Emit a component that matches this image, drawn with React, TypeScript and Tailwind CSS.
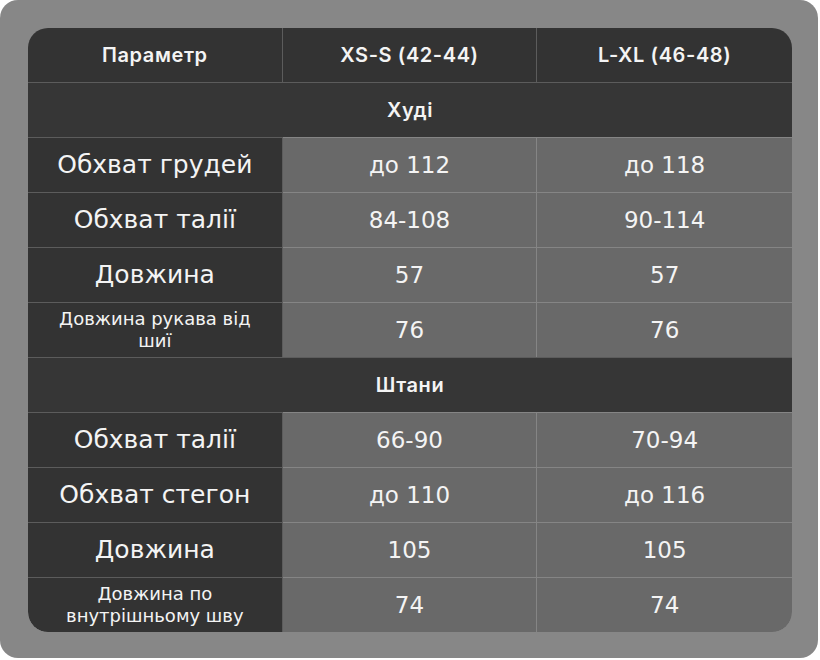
import React from "react";

const rows1 = [
  { label: "Обхват грудей", a: "до 112", b: "до 118", small: false },
  { label: "Обхват талії", a: "84-108", b: "90-114", small: false },
  { label: "Довжина", a: "57", b: "57", small: false },
  { label: "Довжина рукава від шиї", a: "76", b: "76", small: true },
];
const rows2 = [
  { label: "Обхват талії", a: "66-90", b: "70-94", small: false },
  { label: "Обхват стегон", a: "до 110", b: "до 116", small: false },
  { label: "Довжина", a: "105", b: "105", small: false },
  { label: "Довжина по внутрішньому шву", a: "74", b: "74", small: true },
];

const headFont = { fontFamily: 'Inter, "DejaVu Sans", sans-serif' };

function DataRow({ r, last }: { r: { label: string; a: string; b: string; small: boolean }; last?: boolean }) {
  return (
    <div className="grid grid-cols-3 h-[55px]">
      <div
        className={`flex items-center justify-center text-center bg-[#333333] border-t border-r border-[#5c5c5c] px-[24px] ${
          r.small ? "text-[18px] leading-[22px]" : "text-[25px]"
        } ${last ? "rounded-bl-[20px]" : ""}`}
      >
        {r.label}
      </div>
      <div className="flex items-center justify-center bg-[#696969] border-t border-r border-[#858585] text-[23px]">{r.a}</div>
      <div className={`flex items-center justify-center bg-[#696969] border-t border-[#858585] text-[23px] ${last ? "rounded-br-[20px]" : ""}`}>{r.b}</div>
    </div>
  );
}

function Section({ title }: { title: string }) {
  return (
    <div
      className="h-[55px] border-t border-[#5c5c5c] bg-[#363636] flex items-center justify-center text-[20px] font-semibold tracking-[0.03em]"
      style={headFont}
    >
      {title}
    </div>
  );
}

export default function App() {
  return (
    <div className="w-[820px] h-[660px] bg-white">
      <div
        className="w-[818px] h-[658px] bg-[#878787] rounded-[18px] pt-[28px] pl-[28px]"
        style={{ fontFamily: '"DejaVu Sans", sans-serif' }}
      >
        <div className="w-[764px] h-[604px] rounded-[20px] overflow-hidden text-[#f4f4f4] flex flex-col">
          <div className="grid grid-cols-3 h-[54px] bg-[#333333] text-[20px] font-semibold tracking-[0.03em]" style={headFont}>
            <div className="flex items-center justify-center border-r border-[#5c5c5c]">Параметр</div>
            <div className="flex items-center justify-center border-r border-[#5c5c5c]">XS-S (42-44)</div>
            <div className="flex items-center justify-center">L-XL (46-48)</div>
          </div>
          <Section title="Худі" />
          {rows1.map((r, i) => (
            <DataRow key={"a" + i} r={r} />
          ))}
          <Section title="Штани" />
          {rows2.map((r, i) => (
            <DataRow key={"b" + i} r={r} last={i === rows2.length - 1} />
          ))}
        </div>
      </div>
    </div>
  );
}
